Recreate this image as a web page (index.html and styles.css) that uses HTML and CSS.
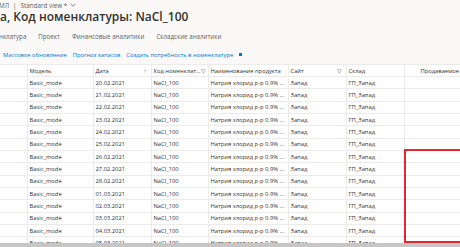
FILE: index.html
```html
<!DOCTYPE html>
<html lang="ru">
<head>
    <meta charset="UTF-8">
    <title>Код номенклатуры: NaCl_100</title>
    <link rel="stylesheet" href="styles.css">
</head>
<body>
    <div class="page">
        <div class="crumb">
            <span class="crumb-app">МЛ</span>
            <span class="sep">|</span>
            <span>Standard view *</span>
            <svg class="chev" width="6" height="4" viewBox="0 0 6 4"><path d="M0.5 0.8 L3 3.2 L5.5 0.8" fill="none" stroke="#605e5c" stroke-width="0.7"/></svg>
        </div>
        <h1 class="title">а, Код номенклатуры: NaCl_100</h1>

        <div class="tabs">
            <span>нклатура</span>
            <span>Проект</span>
            <span>Финансовые аналитики</span>
            <span>Складские аналитики</span>
        </div>

        <div class="actions">
            <svg class="act-icon first" width="4" height="5" viewBox="0 0 4 5"><rect x="0" y="0.5" width="3" height="4" fill="#0078d4"/></svg>
            <span class="act">Массовое обновление</span>
            <span class="act">Прогноз запасов</span>
            <span class="act">Создать потребность в номенклатуре</span>
            <svg class="act-icon" width="4" height="5" viewBox="0 0 4 5"><rect x="0" y="1" width="3" height="3" fill="#0078d4"/></svg>
        </div>

        <div class="grid">
            <table>
                <colgroup>
                    <col style="width:27px">
                    <col style="width:66px">
                    <col style="width:58px">
                    <col style="width:57px">
                    <col style="width:80px">
                    <col style="width:58px">
                    <col style="width:58px">
                    <col style="width:100px">
                </colgroup>
                <thead>
                    <tr>
                        <th></th>
                        <th>Модель</th>
                        <th><span class="hcell">Дата<span class="sort">↑</span></span></th>
                        <th><span class="hcell">Код номенклат...<span class="filt">▽</span></span></th>
                        <th>Наименование продукта</th>
                        <th><span class="hcell">Сайт<span class="filt">▽</span></span></th>
                        <th>Склад</th>
                        <th class="num">Продаваемое количество</th>
                    </tr>
                </thead>
                <tbody id="rows"></tbody>
            </table>
            <div class="highlight"></div>
        </div>
        <div class="hscroll"></div>
    </div>

    <script>
        // строки сетки
        const dates = ['20.02.2021','21.02.2021','22.02.2021','23.02.2021','24.02.2021','25.02.2021','26.02.2021',
                       '27.02.2021','28.02.2021','01.03.2021','02.03.2021','03.03.2021','04.03.2021','05.03.2021'];
        const body = document.getElementById('rows');
        dates.forEach(d => {
            const tr = document.createElement('tr');
            tr.innerHTML = '<td></td><td>Basic_mode</td><td>' + d + '</td><td>NaCl_100</td>' +
                '<td>Натрия хлорид р-р 0.9% ...</td><td>Запад</td><td>ГП_Запад</td><td></td>';
            body.appendChild(tr);
        });
    </script>
</body>
</html>
```

FILE: styles.css
```css
html, body {
    margin: 0;
    padding: 0;
    overflow: hidden;
}
body {
    font-family: 'Open Sans', 'Noto Sans', sans-serif;
    background-color: #faf9f8;
    color: #323130;
    width: 460px;
    height: 247px;
}
.page {
    display: flex;
    flex-direction: column;
    height: 247px;
}
.crumb {
    display: flex;
    align-items: center;
    gap: 2px;
    height: 10px;
    font-size: 6.3px;
    color: #605e5c;
    margin-left: -1px;
    white-space: nowrap;
}
.sep {
    margin: 0 2px;
}
.chev {
    margin-left: 1px;
}
.title {
    margin: 0;
    height: 14px;
    line-height: 14px;
    font-size: 12px;
    font-weight: 600;
    color: #323130;
    white-space: nowrap;
}
.tabs {
    display: flex;
    gap: 12px;
    box-sizing: border-box;
    height: 20px;
    padding-top: 4px;
    align-items: center;
    font-size: 6.2px;
    color: #605e5c;
    margin-left: -1px;
    white-space: nowrap;
}
.actions {
    display: flex;
    align-items: center;
    gap: 6px;
    box-sizing: border-box;
    height: 20px;
    padding-top: 1px;
    font-size: 5.8px;
    color: #0078d4;
    white-space: nowrap;
}
.act-icon {
    flex: none;
}
.act-icon.first {
    margin-left: -3px;
    margin-right: -4px;
}
.grid {
    position: relative;
    flex: 1;
    overflow: hidden;
    background-color: #ffffff;
}
table {
    table-layout: fixed;
    width: 504px;
    border-collapse: collapse;
    font-size: 5.8px;
}
th, td {
    box-sizing: border-box;
    border-right: 1px solid #edebe9;
    border-bottom: 1px solid #edebe9;
    padding: 0 2px;
    text-align: left;
    white-space: nowrap;
    overflow: hidden;
}
th {
    height: 12px;
    font-weight: 400;
    color: #323130;
    border-top: 1px solid #edebe9;
}
td {
    height: 12.33px;
}
.hcell {
    display: flex;
    justify-content: space-between;
    align-items: center;
}
.sort, .filt {
    color: #605e5c;
    font-size: 5.6px;
    margin-right: 2px;
}
th.num {
    padding-left: 16px;
}
.highlight {
    position: absolute;
    left: 404px;
    top: 85px;
    width: 80px;
    height: 90px;
    border: 2px solid #e3262f;
}
.hscroll {
    height: 4px;
    background-color: #c8c6c4;
}
```
